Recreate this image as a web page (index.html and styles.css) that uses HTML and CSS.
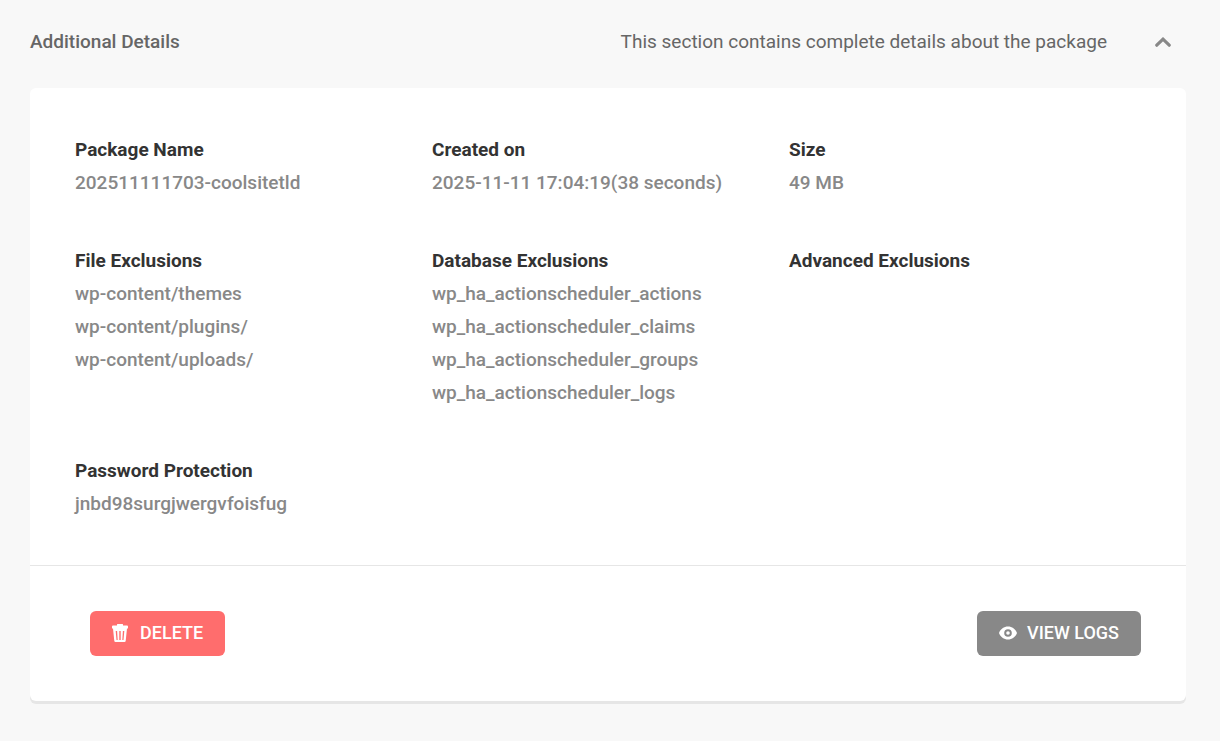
FILE: index.html
```html
<!DOCTYPE html>
<html lang="en">
<head>
<meta charset="utf-8">
<title>Additional Details</title>
<link rel="stylesheet" href="styles.css">
</head>
<body>
<main class="section">
  <header class="section-header">
    <h2 class="section-title">Additional Details</h2>
    <p class="section-note">This section contains complete details about the package</p>
    <button class="toggle" type="button" aria-expanded="true" aria-controls="details" aria-label="Collapse section">
      <svg width="16" height="10" viewBox="0 0 16 10" aria-hidden="true"><path d="M1.800 8.200 8 2.200 14.200 8.200" fill="none" stroke="currentColor" stroke-width="3.200" stroke-linecap="round"/></svg>
    </button>
  </header>
  <section class="card" id="details">
    <dl class="details">
      <div><dt>Package Name</dt><dd>202511111703-coolsitetld</dd></div>
      <div><dt>Created on</dt><dd>2025-11-11 17:04:19(38 seconds)</dd></div>
      <div><dt>Size</dt><dd>49 MB</dd></div>
      <div><dt>File Exclusions</dt><dd>wp-content/themes</dd><dd>wp-content/plugins/</dd><dd>wp-content/uploads/</dd></div>
      <div><dt>Database Exclusions</dt><dd>wp_ha_actionscheduler_actions</dd><dd>wp_ha_actionscheduler_claims</dd><dd>wp_ha_actionscheduler_groups</dd><dd>wp_ha_actionscheduler_logs</dd></div>
      <div><dt>Advanced Exclusions</dt></div>
      <div><dt>Password Protection</dt><dd>jnbd98surgjwergvfoisfug</dd></div>
    </dl>
    <footer class="actions">
      <button class="button button-delete" type="button">
        <svg width="18" height="20" viewBox="0 0 18 20" aria-hidden="true"><path fill="currentColor" fill-rule="evenodd" d="M5 1.500Q5 1 5.500 1H10.500Q11 1 11 1.500V2.500H15Q16 2.500 16 3.500V5.500H0V3.500Q0 2.500 1 2.500H5ZM1 5.500H15L13.700 18Q13.500 19 12.500 19H3.500Q2.500 19 2.300 18ZM3.700 8 4.500 17H5.700L5.100 8ZM7.300 8V17H8.700V8ZM10.900 8 10.300 17H11.500L12.300 8Z"/></svg>
        DELETE
      </button>
      <button class="button button-logs" type="button">
        <svg width="18" height="18" viewBox="1 1 18 18" aria-hidden="true"><path fill="currentColor" fill-rule="evenodd" d="M1 10C2.500 6 6 3.500 10 3.500S17.500 6 19 10C17.500 14 14 16.500 10 16.500S2.500 14 1 10ZM10 6.200A3.800 3.800 0 1 0 10 13.800A3.800 3.800 0 1 0 10 6.200Z"/><circle cx="10" cy="10" r="1.800" fill="currentColor"/></svg>
        VIEW LOGS
      </button>
    </footer>
  </section>
</main>
</body>
</html>
```
FILE: styles.css
```css
* {
  box-sizing: border-box;
}

body {
  margin: 0;
  background: #f8f8f8;
  color: #888;
  font: 500 19px/33px Roboto, sans-serif;
}

h2, p, dl, dd {
  margin: 0;
}

.section {
  padding: 25px 34px 38px 30px;
}

.section-header {
  display: flex;
  align-items: center;
  margin-bottom: 30px;
  color: #666;
}

.section-title {
  flex: 1;
  font-size: 19px;
  font-weight: 500;
}

.section-note {
  font-weight: 400;
}

.toggle {
  display: flex;
  align-items: center;
  justify-content: center;
  width: 46px;
  height: 33px;
  margin-left: 33px;
  padding: 0;
  border: 0;
  background: none;
  color: #888;
  cursor: pointer;
}

.card {
  border-radius: 6px;
  background: #fff;
  box-shadow: 0 3px 0 #e6e6e6;
}

.details {
  display: grid;
  grid-template-columns: repeat(3, 1fr);
  row-gap: 45px;
  padding: 45px 40px 45px 45px;
}

.details dt {
  color: #333;
  font-weight: 700;
}

.actions {
  display: flex;
  justify-content: space-between;
  padding: 45px 45px 45px 60px;
  border-top: 1px solid #e6e6e6;
}

.button {
  display: flex;
  align-items: center;
  gap: 10px;
  height: 45px;
  padding: 0 22px 2px;
  border: 0;
  border-radius: 6px;
  color: #fff;
  font: 500 18px/24px Roboto, sans-serif;
  cursor: pointer;
}

.button-delete {
  background: #ff6d6d;
}

.button-logs {
  background: #888;
}
```
